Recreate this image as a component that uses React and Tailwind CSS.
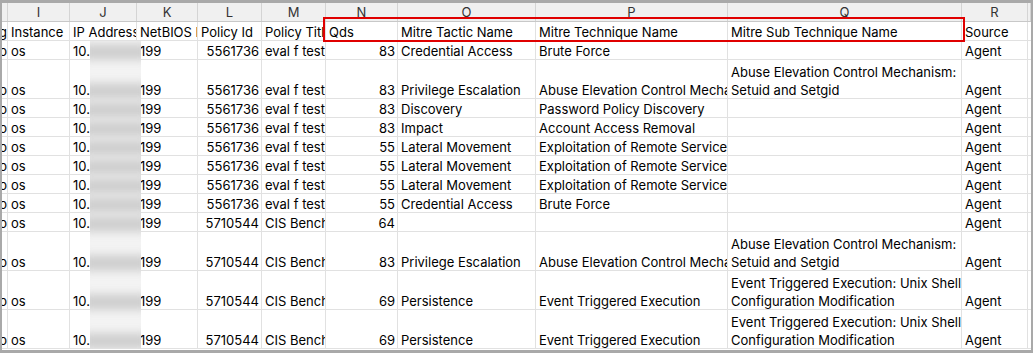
import React from 'react';

const cols = [
  { key: 'h', w: 'w-[6px]' },
  { key: 'i', w: 'w-[62px]', letter: 'I' },
  { key: 'j', w: 'w-[67px]', letter: 'J' },
  { key: 'k', w: 'w-[61px]', letter: 'K' },
  { key: 'l', w: 'w-[64px]', letter: 'L', num: true },
  { key: 'm', w: 'w-[64px]', letter: 'M' },
  { key: 'n', w: 'w-[72px]', letter: 'N', num: true },
  { key: 'o', w: 'w-[138px]', letter: 'O' },
  { key: 'p', w: 'w-[192px]', letter: 'P' },
  { key: 'q', w: 'w-[234px]', letter: 'Q' },
  { key: 'r', w: 'w-[66px]', letter: 'R' },
  { key: 's', w: 'w-[3px]' },
];

const header = {
  h: 'Hosting', i: 'Instance', j: 'IP Address', k: 'NetBIOS Name', l: 'Policy Id', m: 'Policy Title',
  n: 'Qds', o: 'Mitre Tactic Name', p: 'Mitre Technique Name', q: 'Mitre Sub Technique Name', r: 'Source', s: '',
};

const base = { h: 'Demo', i: 'os', j: '10.', k: '199', r: 'Agent', s: '' };
const evalRow = { ...base, l: '5561736', m: 'eval f test' };
const cisRow = { ...base, l: '5710544', m: 'CIS Benchmark' };

const rows = [
  { ...evalRow, n: '83', o: 'Credential Access', p: 'Brute Force', q: '' },
  { ...evalRow, tall: true, n: '83', o: 'Privilege Escalation', p: 'Abuse Elevation Control Mechanism', q: ['Abuse Elevation Control Mechanism:', 'Setuid and Setgid'] },
  { ...evalRow, n: '83', o: 'Discovery', p: 'Password Policy Discovery', q: '' },
  { ...evalRow, n: '83', o: 'Impact', p: 'Account Access Removal', q: '' },
  { ...evalRow, n: '55', o: 'Lateral Movement', p: 'Exploitation of Remote Services', q: '' },
  { ...evalRow, n: '55', o: 'Lateral Movement', p: 'Exploitation of Remote Services', q: '' },
  { ...evalRow, n: '55', o: 'Lateral Movement', p: 'Exploitation of Remote Services', q: '' },
  { ...evalRow, n: '55', o: 'Credential Access', p: 'Brute Force', q: '' },
  { ...cisRow, n: '64', o: '', p: '', q: '' },
  { ...cisRow, tall: true, n: '83', o: 'Privilege Escalation', p: 'Abuse Elevation Control Mechanism', q: ['Abuse Elevation Control Mechanism:', 'Setuid and Setgid'] },
  { ...cisRow, tall: true, n: '69', o: 'Persistence', p: 'Event Triggered Execution', q: ['Event Triggered Execution: Unix Shell', 'Configuration Modification'] },
  { ...cisRow, tall: true, n: '69', o: 'Persistence', p: 'Event Triggered Execution', q: ['Event Triggered Execution: Unix Shell', 'Configuration Modification'] },
];

const Cell = ({ col, value, isHeader }) => {
  const lines = Array.isArray(value) ? value : [value];
  const right = col.num && !isHeader;
  return (
    <div
      className={`${col.w} shrink-0 h-full border-r border-[#e1e1e1] overflow-hidden flex flex-col justify-end ${
        col.key === 'h' ? 'items-end' : right ? 'items-end pr-[2px]' : 'items-start pl-[3px]'
      }`}
    >
      {lines.map((line, idx) => (
        <span key={idx} className="relative top-[1px] whitespace-nowrap leading-[18px]">{line}</span>
      ))}
    </div>
  );
};

const Row = ({ data, tall, isHeader }) => (
  <div className={`flex border-b border-[#e1e1e1] ${tall ? 'h-[39px]' : 'h-[19px]'}`}>
    {cols.map((c) => (
      <Cell key={c.key} col={c} value={data[c.key]} isHeader={isHeader} />
    ))}
  </div>
);

export default function App() {
  return (
    <div className="relative w-[1033px] h-[353px] bg-white overflow-hidden text-[13px] text-black" style={{ fontFamily: 'Inter, "Noto Sans", sans-serif' }}>
      <div className="w-full h-full border-l-2 border-r-2 border-t-[3px] border-b-[3px] border-[#a9a9a9] overflow-hidden">
        {/* column letters */}
        <div className="flex h-[19px] bg-[#f0f0f0] border-b border-[#c8c8c8]">
          {cols.map((c) => (
            <div key={c.key} className={`${c.w} shrink-0 h-full border-r border-[#d4d4d4] flex items-center justify-center pt-[1px] text-[#333] leading-none`}>
              {c.letter || ''}
            </div>
          ))}
        </div>
        <Row data={header} isHeader />
        {rows.map((r, idx) => (
          <Row key={idx} data={r} tall={r.tall} />
        ))}
      </div>

      {/* redacted IP addresses */}
      <div className="absolute left-[90px] top-[41px] w-[51px] h-[308px] bg-[#f3f3f3] overflow-hidden flex flex-col">
        {rows.map((r, idx) => (
          <div key={idx} className={`shrink-0 flex flex-col justify-end ${r.tall ? 'h-[39px]' : 'h-[19px]'}`}>
            <div className="h-[16px] mx-[-6px] bg-[#cfcfcf] blur-[4px]" />
          </div>
        ))}
      </div>

      {/* highlight */}
      <div className="absolute left-[323px] top-[17px] w-[642px] h-[25px] border-2 border-[#e00000]" />
    </div>
  );
}
